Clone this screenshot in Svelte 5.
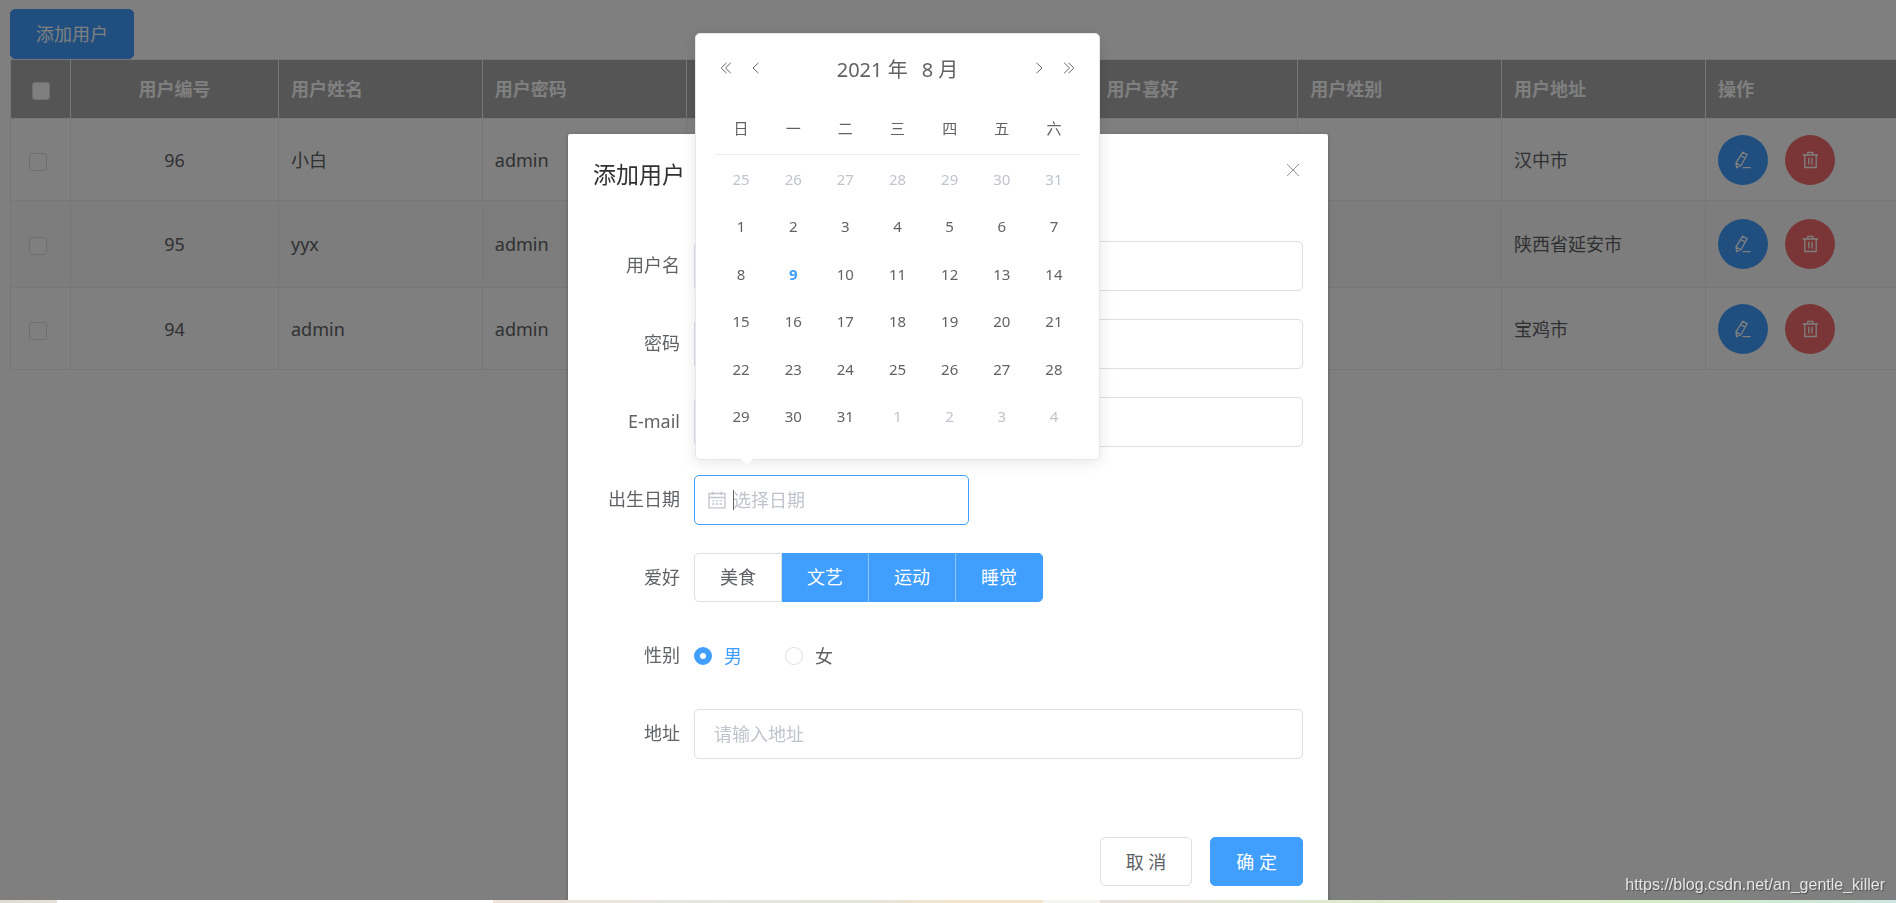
<script>
  let users = $state([
    { id: 96, name: '小白', password: 'admin', address: '汉中市', checked: false },
    { id: 95, name: 'yyx', password: 'admin', address: '陕西省延安市', checked: false },
    { id: 94, name: 'admin', password: 'admin', address: '宝鸡市', checked: false }
  ]);

  let form = $state({
    username: '',
    password: '',
    email: '',
    birthday: '',
    hobbies: ['文艺', '运动', '睡觉'],
    sex: '男',
    address: ''
  });

  const hobbyOptions = ['美食', '文艺', '运动', '睡觉'];
  const weekDays = ['日', '一', '二', '三', '四', '五', '六'];
  const today = 9;

  // six weeks, starting on the sunday before the 1st
  const buildWeeks = (year, month) => {
    const first = new Date(year, month - 1, 1);
    const lead = first.getDay() || 7;
    const weeks = [];
    for (let w = 0; w < 6; w++) {
      const week = [];
      for (let d = 0; d < 7; d++) {
        const date = new Date(year, month - 1, 1 - lead + w * 7 + d);
        week.push({ day: date.getDate(), current: date.getMonth() === month - 1 });
      }
      weeks.push(week);
    }
    return weeks;
  };

  const weeks = buildWeeks(2021, 8);

  const toggleAll = (event) => {
    users.forEach((u) => (u.checked = event.target.checked));
  };
</script>

<main>
  <button class="btn primary add" type="button">添加用户</button>
  <table class="users">
    <colgroup>
      <col class="col-check" />
      <col class="col-id" />
      <col /><col /><col /><col /><col /><col /><col />
      <col class="col-action" />
    </colgroup>
    <thead>
      <tr>
        <th class="check"><input type="checkbox" aria-label="全选" onchange={toggleAll} /></th>
        <th class="center">用户编号</th>
        <th>用户姓名</th>
        <th>用户密码</th>
        <th></th>
        <th></th>
        <th>用户喜好</th>
        <th>用户姓别</th>
        <th>用户地址</th>
        <th>操作</th>
      </tr>
    </thead>
    <tbody>
      {#each users as user}
        <tr>
          <td class="check"><input type="checkbox" aria-label={user.name} bind:checked={user.checked} /></td>
          <td class="center">{user.id}</td>
          <td>{user.name}</td>
          <td>{user.password}</td>
          <td></td>
          <td></td>
          <td></td>
          <td></td>
          <td>{user.address}</td>
          <td>
            <div class="actions">
              <button class="circle edit" type="button" aria-label="编辑">
                <svg viewBox="0 0 18 18" width="18" height="18">
                  <path d="M8.7 1.2 L13.2 3.6 L7 14.6 L2.6 16.6 L2 11.8 Z M6.8 4.7 L11.3 7.1 M2.2 12 L6.6 14.5 M8.6 16.6 H16.6" />
                </svg>
              </button>
              <button class="circle delete" type="button" aria-label="删除">
                <svg viewBox="0 0 18 18" width="18" height="18">
                  <path d="M1.6 4 H17 M6.8 3.8 V1.3 H11.8 V3.8 M3.8 4 V16.5 H15.2 V4 M7.8 6.8 V13.6 M11 6.8 V13.6" />
                </svg>
              </button>
            </div>
          </td>
        </tr>
      {/each}
    </tbody>
  </table>
</main>

<div class="overlay">
  <div class="dialog" role="dialog" aria-label="添加用户">
    <header>
      <h2>添加用户</h2>
      <button class="close" type="button" aria-label="关闭">
        <svg viewBox="0 0 12 12" width="12" height="12"><path d="M0 0 L12 12 M12 0 L0 12" /></svg>
      </button>
    </header>

    <form>
      <div class="item">
        <label for="username">用户名</label>
        <input class="text" id="username" type="text" bind:value={form.username} />
      </div>
      <div class="item">
        <label for="password">密码</label>
        <input class="text" id="password" type="password" bind:value={form.password} />
      </div>
      <div class="item">
        <label for="email">E-mail</label>
        <input class="text" id="email" type="text" bind:value={form.email} />
      </div>
      <div class="item">
        <label for="birthday">出生日期</label>
        <div class="date">
          <input class="text" id="birthday" type="text" placeholder="选择日期" bind:value={form.birthday} />
          <svg class="calendar" viewBox="0 0 18 18" width="18" height="18">
            <path d="M1 2.5 H17 V16.8 H1 Z M1 6.5 H17 M4.8 0.5 V4 M13.2 0.5 V4" />
            <path d="M4.2 9.8 H6.4 M7.9 9.8 H10.1 M11.6 9.8 H13.8 M4.2 13 H6.4 M7.9 13 H10.1 M11.6 13 H13.8" />
          </svg>
          <span class="caret"></span>

          <div class="picker">
            <div class="picker-head">
              <button type="button" aria-label="前一年">
                <svg viewBox="0 0 12 12" width="12" height="12"><path d="M6.5 0.8 L1.2 6 L6.5 11.2 M10.8 0.8 L5.5 6 L10.8 11.2" /></svg>
              </button>
              <button type="button" aria-label="上个月">
                <svg viewBox="0 0 12 12" width="12" height="12"><path d="M8.5 0.8 L3 6 L8.5 11.2" /></svg>
              </button>
              <div class="picker-title">
                <span>2021 年</span>
                <span>8 月</span>
              </div>
              <button type="button" aria-label="下个月">
                <svg viewBox="0 0 12 12" width="12" height="12"><path d="M3.5 0.8 L9 6 L3.5 11.2" /></svg>
              </button>
              <button type="button" aria-label="后一年">
                <svg viewBox="0 0 12 12" width="12" height="12"><path d="M1.2 0.8 L6.5 6 L1.2 11.2 M5.5 0.8 L10.8 6 L5.5 11.2" /></svg>
              </button>
            </div>
            <table class="days">
              <thead>
                <tr>
                  {#each weekDays as day}
                    <th>{day}</th>
                  {/each}
                </tr>
              </thead>
              <tbody>
                {#each weeks as week}
                  <tr>
                    {#each week as cell}
                      <td class:other={!cell.current} class:today={cell.current && cell.day === today}>{cell.day}</td>
                    {/each}
                  </tr>
                {/each}
              </tbody>
            </table>
          </div>
        </div>
      </div>
      <div class="item">
        <span class="label">爱好</span>
        <div class="hobbies">
          {#each hobbyOptions as hobby}
            <label class:active={form.hobbies.includes(hobby)}>
              <input type="checkbox" value={hobby} bind:group={form.hobbies} />{hobby}
            </label>
          {/each}
        </div>
      </div>
      <div class="item">
        <span class="label">性别</span>
        <div class="radios">
          {#each ['男', '女'] as sex}
            <label class:active={form.sex === sex}>
              <input type="radio" name="sex" value={sex} bind:group={form.sex} />{sex}
            </label>
          {/each}
        </div>
      </div>
      <div class="item">
        <label for="address">地址</label>
        <input class="text" id="address" type="text" placeholder="请输入地址" bind:value={form.address} />
      </div>
    </form>

    <footer>
      <button class="btn" type="button">取 消</button>
      <button class="btn primary" type="button">确 定</button>
    </footer>
  </div>
</div>

<div class="strip"></div>
<a class="watermark" href="https://blog.csdn.net/an_gentle_killer">https://blog.csdn.net/an_gentle_killer</a>

<style>
  :global(body) {
    background: #fff;
    overflow: hidden;
  }
  :global(#app),
  button,
  input {
    font-family: "Noto Sans", "Noto Sans CJK SC", sans-serif;
    font-size: 18px;
    color: #606266;
  }
  * {
    box-sizing: border-box;
  }
  button {
    cursor: pointer;
  }
  svg {
    display: block;
    fill: none;
    stroke: currentColor;
  }

  main {
    padding: 9px 0 0 10px;
  }
  .btn {
    height: 49px;
    padding: 0 25px;
    line-height: 24px;
    background: #fff;
    border: 1px solid #dcdfe6;
    border-radius: 5px;
  }
  .btn.primary {
    color: #fff;
    background: #409eff;
    border-color: #409eff;
  }
  .add {
    display: block;
    height: 50px;
  }

  .users {
    width: 100%;
    table-layout: fixed;
    border-collapse: separate;
    border-spacing: 0;
    line-height: 24px;
    border-top: 1px solid #ebeef5;
    border-left: 1px solid #ebeef5;
  }
  .col-check {
    width: 60px;
  }
  .col-id {
    width: 208px;
  }
  .col-action {
    width: 190px;
  }
  .users th,
  .users td {
    padding: 0 12px;
    text-align: left;
    border-right: 1px solid #ebeef5;
    border-bottom: 1px solid #ebeef5;
  }
  .users th:last-child,
  .users td:last-child {
    border-right: none;
  }
  .users th {
    height: 59px;
    color: #fff;
    background: #aaa;
  }
  .users td {
    height: 82px;
  }
  .users tbody tr:nth-child(even) td {
    height: 87px;
    background: #fafafa;
  }
  .users .center {
    text-align: center;
  }
  .users th.check {
    padding: 0;
    text-align: center;
  }
  .users td.check {
    padding: 0 18px;
  }
  .check input {
    appearance: none;
    display: inline-block;
    width: 18px;
    height: 18px;
    margin: 0;
    vertical-align: middle;
    background: #fff;
    border: 1px solid #dcdfe6;
    border-radius: 3px;
  }
  .check input:checked {
    background: #409eff;
  }
  .actions {
    display: flex;
    gap: 17px;
  }
  .circle {
    display: flex;
    align-items: center;
    justify-content: center;
    width: 50px;
    height: 50px;
    padding: 0;
    color: #fff;
    border: none;
    border-radius: 50%;
  }
  .circle svg {
    stroke-width: 1.3;
  }
  .edit {
    background: #409eff;
  }
  .delete {
    background: #f56c6c;
  }

  .overlay {
    position: fixed;
    inset: 0 0 3px 0;
    overflow: hidden;
    background: rgba(0, 0, 0, 0.5);
  }
  .dialog {
    width: min(760px, 90%);
    margin: 134px auto 0;
    background: #fff;
    border-radius: 2px;
    box-shadow: 0 1px 4px rgba(0, 0, 0, 0.3);
  }
  header {
    display: flex;
    justify-content: space-between;
    padding: 24px 25px 12px;
  }
  h2 {
    margin: 0;
    font-size: 23px;
    line-height: 32px;
    font-weight: 400;
    color: #303133;
  }
  .close {
    align-self: flex-start;
    padding: 6px 4px;
    color: #909399;
    background: none;
    border: none;
  }
  form {
    padding: 39px 25px 38px;
  }
  .item {
    display: flex;
    height: 50px;
    margin-bottom: 28px;
  }
  .item > label,
  .label {
    flex: none;
    width: 101px;
    padding-right: 14px;
    line-height: 48px;
    text-align: right;
  }
  .text {
    width: 100%;
    height: 50px;
    padding: 0 19px;
    background: #fff;
    border: 1px solid #dcdfe6;
    border-radius: 5px;
    outline: none;
  }
  .text::placeholder {
    color: #c0c4cc;
  }

  .date {
    position: relative;
    width: 275px;
  }
  .date .text {
    padding: 0 38px;
    border-color: #409eff;
  }
  .calendar {
    position: absolute;
    top: 16px;
    left: 14px;
    color: #c0c4cc;
    stroke-width: 1.3;
  }
  .caret {
    position: absolute;
    top: 15px;
    left: 39px;
    width: 1px;
    height: 20px;
    background: #606266;
  }

  .picker {
    position: absolute;
    bottom: calc(100% + 15px);
    left: 1px;
    width: 405px;
    padding: 0 19px 19px;
    background: #fff;
    border: 1px solid #e4e7ed;
    border-radius: 5px;
    box-shadow: 0 2px 15px rgba(0, 0, 0, 0.1);
  }
  .picker::after {
    content: "";
    position: absolute;
    top: 100%;
    left: 45px;
    border: 6px solid transparent;
    border-top-color: #fff;
    border-bottom: none;
  }
  .picker-head {
    display: flex;
    align-items: center;
    height: 68px;
    margin: 0 -4px;
  }
  .picker-head button {
    width: 30px;
    padding: 9px;
    background: none;
    border: none;
  }
  .picker-title {
    display: flex;
    flex: 1;
    justify-content: center;
    gap: 14px;
    font-size: 20px;
  }
  .days {
    width: 100%;
    height: 338px;
    table-layout: fixed;
    border-collapse: separate;
    border-spacing: 0;
    font-size: 15px;
    line-height: 20px;
  }
  .days th,
  .days td {
    padding: 0;
    text-align: center;
    cursor: pointer;
  }
  .days th {
    height: 53px;
    font-weight: 400;
    border-bottom: 1px solid #ebeef5;
  }
  .days .other {
    color: #c0c4cc;
  }
  .days .today {
    font-weight: 700;
    color: #409eff;
  }

  .hobbies {
    display: flex;
  }
  .hobbies label {
    position: relative;
    height: 49px;
    padding: 0 25px;
    line-height: 46px;
    border: 1px solid #dcdfe6;
    border-left: none;
  }
  .hobbies label:first-child {
    border-left: 1px solid #dcdfe6;
    border-radius: 5px 0 0 5px;
  }
  .hobbies label:last-child {
    border-radius: 0 5px 5px 0;
  }
  .hobbies .active {
    color: #fff;
    background: #409eff;
    border-color: #409eff;
    border-right-color: #8cc5ff;
  }
  .hobbies .active:last-child {
    border-right-color: #409eff;
  }
  .hobbies input {
    position: absolute;
    margin: 0;
    opacity: 0;
  }

  .radios {
    display: flex;
    gap: 43px;
    line-height: 48px;
  }
  .radios label {
    display: flex;
    align-items: center;
    gap: 12px;
  }
  .radios input {
    appearance: none;
    width: 18px;
    height: 18px;
    margin: 0;
    background: #fff;
    border: 1px solid #dcdfe6;
    border-radius: 50%;
  }
  .radios input:checked {
    border: 6px solid #409eff;
  }
  .radios .active {
    color: #409eff;
  }

  footer {
    display: flex;
    justify-content: flex-end;
    gap: 18px;
    padding: 12px 25px 25px;
  }

  .strip {
    position: fixed;
    right: 0;
    bottom: 0;
    left: 0;
    height: 3px;
    background: linear-gradient(
      to right,
      #dedcd0 0%,
      #e6e2d8 3%,
      #fff 3%,
      #fff 26%,
      #f0e3d8 26%,
      #e4e6e0 38%,
      #e6e4da 46%,
      #f3e4cc 50%,
      #f3e4cc 55%,
      #f6f4f0 55%,
      #f6f4f0 58%,
      #e8dfdc 58%,
      #dcecc8 75%,
      #d6edc8 88%,
      #cbe6e0 100%
    );
  }
  .watermark {
    position: fixed;
    right: 11px;
    bottom: 8px;
    font-family: "Liberation Sans", Arial, sans-serif;
    font-size: 16px;
    line-height: 20px;
    color: #e6e6e6;
    text-decoration: none;
    text-shadow: 1px 1px 1px rgba(0, 0, 0, 0.4);
  }
</style>
